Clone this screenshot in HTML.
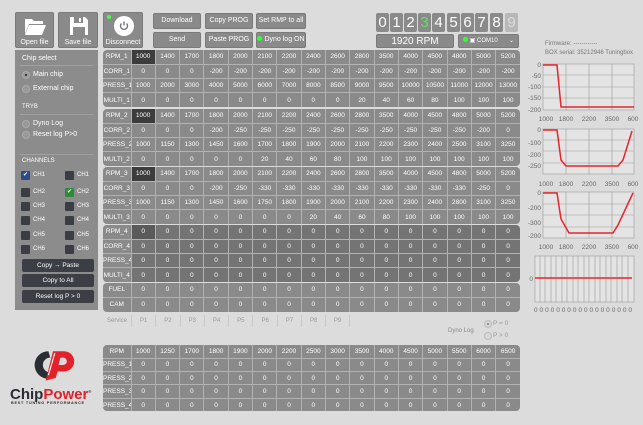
<!DOCTYPE html>
<html><head><meta charset="utf-8"><style>
*{margin:0;padding:0;box-sizing:border-box}
body{width:643px;height:425px;background:#dcdcdc;font-family:"Liberation Sans",sans-serif;position:relative;overflow:hidden;color:#fff}
.a{position:absolute}
.btn{position:absolute;background:#8a8a8a;border:1px solid #7a7a7a;border-radius:2px;color:#fff;font-size:7px;text-align:center}
table{position:absolute;left:103px;width:417px;border-collapse:collapse;table-layout:fixed;font-size:6.5px;color:#fff;text-align:center}
td{border:1px solid #b2b2b2;height:14.3px;padding:0;overflow:hidden;white-space:nowrap}
.bt td{height:13.3px}
td:first-child{width:28px;border-left:none}
td:last-child{border-right:none}
tr:first-child td{border-top:none}tr:last-child td{border-bottom:none}
.t{background:#8a8a8a;border-radius:4px;overflow:hidden}
.d{background:#747474}
.h{background:#3c3c3c}
.lp{position:absolute;left:15px;top:50px;width:83px;height:260px;background:#8c8c8c;font-size:7px}
.cb{position:absolute;width:9px;height:9px;background:#3a3d44;border-radius:1px}
.db{position:absolute;left:22px;width:72px;height:13px;background:#3b3e44;border-radius:2px;font-size:6.5px;text-align:center;line-height:13px}
.dg{position:absolute;top:13px;width:13px;height:19px;background:#8a8a8a;border-radius:2px;font-size:15px;line-height:19px;text-align:center}
.rd{position:absolute;width:8px;height:8px;border-radius:50%;border:1px solid #aaa;background:#999}
</style></head><body>

<div class="btn" style="left:15px;top:12px;width:39px;height:36px">
<svg class="a" style="left:8px;top:3px" width="22" height="20" viewBox="0 0 22 20"><path d="M1 3h7l2 2h9v3H5L1 18z" fill="#fff"/><path d="M5 9h17l-4 10H1z" fill="#fff"/></svg>
<div class="a" style="left:0;top:26px;width:37px">Open file</div></div>
<div class="btn" style="left:58px;top:12px;width:40px;height:36px">
<svg class="a" style="left:10px;top:3px" width="20" height="20" viewBox="0 0 20 20"><path d="M1 1h15l3 3v15H1z" fill="#fff"/><rect x="5" y="1" width="9" height="6" fill="#8a8a8a"/><rect x="10" y="2" width="2" height="4" fill="#fff"/><rect x="4" y="11" width="12" height="8" fill="#8a8a8a"/></svg>
<div class="a" style="left:0;top:26px;width:38px">Save file</div></div>
<div class="btn" style="left:103px;top:12px;width:40px;height:36px">
<div class="a" style="left:3px;top:2px;width:4px;height:4px;border-radius:50%;background:#4f4"></div>
<div class="a" style="left:10px;top:3px;width:20px;height:20px;border-radius:50%;background:#fff"></div>
<svg class="a" style="left:14px;top:7px" width="12" height="12" viewBox="0 0 12 12"><path d="M3.5 3.5A3.5 3.5 0 1 0 8.5 3.5" fill="none" stroke="#777" stroke-width="1.4"/><path d="M6 1.5v4" stroke="#777" stroke-width="1.4"/></svg>
<div class="a" style="left:0;top:26px;width:38px">Disconnect</div></div>

<div class="btn" style="left:153px;top:13px;width:48px;height:16px;line-height:14px">Download</div>
<div class="btn" style="left:153px;top:32px;width:48px;height:16px;line-height:14px">Send</div>
<div class="btn" style="left:205px;top:13px;width:48px;height:16px;line-height:14px">Copy PROG</div>
<div class="btn" style="left:205px;top:32px;width:48px;height:16px;line-height:14px">Paste PROG</div>
<div class="btn" style="left:256px;top:13px;width:50px;height:16px;line-height:14px">Set RMP to all</div>
<div class="btn" style="left:256px;top:32px;width:50px;height:16px;line-height:14px"><span style="display:inline-block;width:5px;height:5px;border-radius:50%;background:#3f3;margin-right:2px"></span>Dyno log ON</div>

<div class="dg" style="left:376px">0</div><div class="dg" style="left:390px">1</div><div class="dg" style="left:404px">2</div><div class="dg" style="left:418px;color:#6d6">3</div><div class="dg" style="left:432px">4</div><div class="dg" style="left:447px">5</div><div class="dg" style="left:461px">6</div><div class="dg" style="left:475px">7</div><div class="dg" style="left:490px">8</div><div class="dg" style="left:505px;background:#b8b8b8;color:#ddd">9</div>
<div class="btn" style="left:376px;top:34px;width:78px;height:14px;font-size:10px;line-height:13px">1920 RPM</div>
<div class="btn" style="left:458px;top:34px;width:61px;height:14px;font-size:6px;line-height:12px;text-align:left;padding-left:4px"><span style="display:inline-block;width:5px;height:5px;border-radius:50%;background:#3f3"></span> ▣ COM10 <span style="float:right;margin-right:4px">⌄</span></div>

<div class="lp">
<div class="a" style="left:7px;top:5px">Chip select</div>
<div class="a" style="left:5px;top:15px;width:73px;height:1px;background:#a0a0a0"></div>
<div class="rd" style="left:7px;top:21px"><div class="a" style="left:2px;top:2px;width:2px;height:2px;background:#222;border-radius:50%"></div></div>
<div class="a" style="left:18px;top:21px">Main chip</div>
<div class="rd" style="left:7px;top:35px"></div><div class="a" style="left:18px;top:35px">External chip</div>
<div class="a" style="left:7px;top:54px;font-size:6px">TRYB</div>
<div class="a" style="left:5px;top:64px;width:73px;height:1px;background:#a0a0a0"></div>
<div class="rd" style="left:7px;top:70px"></div><div class="a" style="left:18px;top:70px">Dyno Log</div>
<div class="rd" style="left:7px;top:81px"></div><div class="a" style="left:18px;top:81px">Reset log P&gt;0</div>
<div class="a" style="left:5px;top:104px;width:73px;height:1px;background:#a0a0a0"></div>
<div class="a" style="left:7px;top:108px;font-size:6px">CHANNELS</div>
<div class="cb" style="left:6px;top:121px;background:#2d4a8a;font-size:6px;line-height:9px;text-align:center">✔</div><div class="a" style="left:18px;top:122px;font-size:6px">CH1</div>
<div class="cb" style="left:50px;top:121px"></div><div class="a" style="left:62px;top:122px;font-size:6px">CH1</div>
<div class="cb" style="left:6px;top:138px"></div><div class="a" style="left:18px;top:139px;font-size:6px">CH2</div>
<div class="cb" style="left:50px;top:138px;background:#2f8a3a;font-size:6px;line-height:9px;text-align:center">✔</div><div class="a" style="left:62px;top:139px;font-size:6px">CH2</div>
<div class="cb" style="left:6px;top:152px"></div><div class="a" style="left:18px;top:153px;font-size:6px">CH3</div>
<div class="cb" style="left:50px;top:152px"></div><div class="a" style="left:62px;top:153px;font-size:6px">CH3</div>
<div class="cb" style="left:6px;top:166px"></div><div class="a" style="left:18px;top:167px;font-size:6px">CH4</div>
<div class="cb" style="left:50px;top:166px"></div><div class="a" style="left:62px;top:167px;font-size:6px">CH4</div>
<div class="cb" style="left:6px;top:181px"></div><div class="a" style="left:18px;top:182px;font-size:6px">CH5</div>
<div class="cb" style="left:50px;top:181px"></div><div class="a" style="left:62px;top:182px;font-size:6px">CH5</div>
<div class="cb" style="left:6px;top:195px"></div><div class="a" style="left:18px;top:196px;font-size:6px">CH6</div>
<div class="cb" style="left:50px;top:195px"></div><div class="a" style="left:62px;top:196px;font-size:6px">CH6</div>
</div>
<div class="db" style="top:259px">Copy → Paste</div>
<div class="db" style="top:274px">Copy to All</div>
<div class="db" style="top:290px">Reset log P &gt; 0</div>

<table class="t" style="top:50px"><tr><td>RPM_1</td><td class="h">1000</td><td>1400</td><td>1700</td><td>1800</td><td>2000</td><td>2100</td><td>2200</td><td>2400</td><td>2600</td><td>2800</td><td>3500</td><td>4000</td><td>4500</td><td>4800</td><td>5000</td><td>5200</td></tr>
<tr><td>CORR_1</td><td>0</td><td>0</td><td>0</td><td>-200</td><td>-200</td><td>-200</td><td>-200</td><td>-200</td><td>-200</td><td>-200</td><td>-200</td><td>-200</td><td>-200</td><td>-200</td><td>-200</td><td>-200</td></tr>
<tr><td>PRESS_1</td><td>1000</td><td>2000</td><td>3000</td><td>4000</td><td>5000</td><td>6000</td><td>7000</td><td>8000</td><td>8500</td><td>9000</td><td>9500</td><td>10000</td><td>10500</td><td>11000</td><td>12000</td><td>13000</td></tr>
<tr><td>MULTI_1</td><td>0</td><td>0</td><td>0</td><td>0</td><td>0</td><td>0</td><td>0</td><td>0</td><td>0</td><td>20</td><td>40</td><td>60</td><td>80</td><td>100</td><td>100</td><td>100</td></tr></table>

<table class="t" style="top:109px"><tr><td>RPM_2</td><td class="h">1000</td><td>1400</td><td>1700</td><td>1800</td><td>2000</td><td>2100</td><td>2200</td><td>2400</td><td>2600</td><td>2800</td><td>3500</td><td>4000</td><td>4500</td><td>4800</td><td>5000</td><td>5200</td></tr>
<tr><td>CORR_2</td><td>0</td><td>0</td><td>0</td><td>-200</td><td>-250</td><td>-250</td><td>-250</td><td>-250</td><td>-250</td><td>-250</td><td>-250</td><td>-250</td><td>-250</td><td>-250</td><td>-200</td><td>0</td></tr>
<tr><td>PRESS_2</td><td>1000</td><td>1150</td><td>1300</td><td>1450</td><td>1600</td><td>1700</td><td>1800</td><td>1900</td><td>2000</td><td>2100</td><td>2200</td><td>2300</td><td>2400</td><td>2500</td><td>3100</td><td>3250</td></tr>
<tr><td>MULTI_2</td><td>0</td><td>0</td><td>0</td><td>0</td><td>0</td><td>20</td><td>40</td><td>60</td><td>80</td><td>100</td><td>100</td><td>100</td><td>100</td><td>100</td><td>100</td><td>100</td></tr></table>

<table class="t" style="top:167px"><tr><td>RPM_3</td><td class="h">1000</td><td>1400</td><td>1700</td><td>1800</td><td>2000</td><td>2100</td><td>2200</td><td>2400</td><td>2600</td><td>2800</td><td>3500</td><td>4000</td><td>4500</td><td>4800</td><td>5000</td><td>5200</td></tr>
<tr><td>CORR_3</td><td>0</td><td>0</td><td>0</td><td>-200</td><td>-250</td><td>-330</td><td>-330</td><td>-330</td><td>-330</td><td>-330</td><td>-330</td><td>-330</td><td>-330</td><td>-330</td><td>-250</td><td>0</td></tr>
<tr><td>PRESS_3</td><td>1000</td><td>1150</td><td>1300</td><td>1450</td><td>1600</td><td>1750</td><td>1800</td><td>1900</td><td>2000</td><td>2100</td><td>2200</td><td>2300</td><td>2400</td><td>2800</td><td>3100</td><td>3250</td></tr>
<tr><td>MULTI_3</td><td>0</td><td>0</td><td>0</td><td>0</td><td>0</td><td>0</td><td>0</td><td>20</td><td>40</td><td>60</td><td>80</td><td>100</td><td>100</td><td>100</td><td>100</td><td>100</td></tr></table>

<table class="t d" style="top:225px"><tr><td style="background:#8a8a8a">RPM_4</td><td class="h" style="background:#5a5a5a">0</td><td>0</td><td>0</td><td>0</td><td>0</td><td>0</td><td>0</td><td>0</td><td>0</td><td>0</td><td>0</td><td>0</td><td>0</td><td>0</td><td>0</td><td>0</td></tr>
<tr><td style="background:#8a8a8a">CORR_4</td><td>0</td><td>0</td><td>0</td><td>0</td><td>0</td><td>0</td><td>0</td><td>0</td><td>0</td><td>0</td><td>0</td><td>0</td><td>0</td><td>0</td><td>0</td><td>0</td></tr>
<tr><td style="background:#8a8a8a">PRESS_4</td><td>0</td><td>0</td><td>0</td><td>0</td><td>0</td><td>0</td><td>0</td><td>0</td><td>0</td><td>0</td><td>0</td><td>0</td><td>0</td><td>0</td><td>0</td><td>0</td></tr>
<tr><td style="background:#8a8a8a">MULTI_4</td><td>0</td><td>0</td><td>0</td><td>0</td><td>0</td><td>0</td><td>0</td><td>0</td><td>0</td><td>0</td><td>0</td><td>0</td><td>0</td><td>0</td><td>0</td><td>0</td></tr></table>

<table class="t" style="top:283px"><tr><td>FUEL</td><td>0</td><td>0</td><td>0</td><td>0</td><td>0</td><td>0</td><td>0</td><td>0</td><td>0</td><td>0</td><td>0</td><td>0</td><td>0</td><td>0</td><td>0</td><td>0</td></tr>
<tr><td>CAM</td><td>0</td><td>0</td><td>0</td><td>0</td><td>0</td><td>0</td><td>0</td><td>0</td><td>0</td><td>0</td><td>0</td><td>0</td><td>0</td><td>0</td><td>0</td><td>0</td></tr></table>

<div class="a" style="left:103px;top:315px;width:270px;font-size:6px;color:#999;display:flex">
<div style="width:28px;text-align:center;line-height:12px">Service</div>
<div style="width:24.3px;text-align:center;border-left:1px solid #c8c8c8;line-height:12px">P1</div><div style="width:24.3px;text-align:center;border-left:1px solid #c8c8c8;line-height:12px">P2</div><div style="width:24.3px;text-align:center;border-left:1px solid #c8c8c8;line-height:12px">P3</div><div style="width:24.3px;text-align:center;border-left:1px solid #c8c8c8;line-height:12px">P4</div><div style="width:24.3px;text-align:center;border-left:1px solid #c8c8c8;line-height:12px">P5</div><div style="width:24.3px;text-align:center;border-left:1px solid #c8c8c8;line-height:12px">P6</div><div style="width:24.3px;text-align:center;border-left:1px solid #c8c8c8;line-height:12px">P7</div><div style="width:24.3px;text-align:center;border-left:1px solid #c8c8c8;line-height:12px">P8</div><div style="width:24.3px;text-align:center;border-left:1px solid #c8c8c8;border-right:1px solid #c8c8c8;line-height:12px">P9</div></div>

<div class="a" style="left:448px;top:328px;font-size:6px;color:#888">Dyno Log</div>
<div class="rd" style="left:484px;top:320px;background:#d8d8d8;border-color:#bbb"><div class="a" style="left:2px;top:2px;width:2px;height:2px;background:#777;border-radius:50%"></div></div><div class="a" style="left:493px;top:320px;font-size:6.5px;color:#999">P = 0</div>
<div class="rd" style="left:484px;top:332px;background:#d8d8d8;border-color:#bbb"></div><div class="a" style="left:493px;top:332px;font-size:6.5px;color:#999">P &gt; 0</div>

<table class="t bt" style="top:345px"><tr><td>RPM</td><td>1000</td><td>1250</td><td>1700</td><td>1800</td><td>1900</td><td>2000</td><td>2200</td><td>2500</td><td>3000</td><td>3500</td><td>4000</td><td>4500</td><td>5000</td><td>5500</td><td>6000</td><td>6500</td></tr>
<tr><td>PRESS_1</td><td>0</td><td>0</td><td>0</td><td>0</td><td>0</td><td>0</td><td>0</td><td>0</td><td>0</td><td>0</td><td>0</td><td>0</td><td>0</td><td>0</td><td>0</td><td>0</td></tr>
<tr><td>PRESS_2</td><td>0</td><td>0</td><td>0</td><td>0</td><td>0</td><td>0</td><td>0</td><td>0</td><td>0</td><td>0</td><td>0</td><td>0</td><td>0</td><td>0</td><td>0</td><td>0</td></tr>
<tr><td>PRESS_3</td><td>0</td><td>0</td><td>0</td><td>0</td><td>0</td><td>0</td><td>0</td><td>0</td><td>0</td><td>0</td><td>0</td><td>0</td><td>0</td><td>0</td><td>0</td><td>0</td></tr>
<tr><td>PRESS_4</td><td>0</td><td>0</td><td>0</td><td>0</td><td>0</td><td>0</td><td>0</td><td>0</td><td>0</td><td>0</td><td>0</td><td>0</td><td>0</td><td>0</td><td>0</td><td>0</td></tr></table>

<svg class="a" style="left:30px;top:346px" width="46" height="38" viewBox="0 0 50 38">
<path d="M20 4A15 15 0 1 0 20 34L22 27A8 8 0 1 1 22 11Z" fill="#2a2d33"/>
<path d="M17 36L25 4H37A11 11 0 0 1 37 26H30L28 33ZM31 19H36A4 4 0 0 0 36 11H33Z" fill="#e2212b"/>
<path d="M20 30L27 6" stroke="#fff" stroke-width="1.2"/>
</svg>
<div class="a" style="left:10px;top:385px;font-size:15px;font-weight:bold;color:#2a2d33;line-height:14px">Chip<span style="color:#e2212b">Power</span><sup style="font-size:4px">®</sup></div>
<div class="a" style="left:11px;top:401px;font-size:3.8px;font-weight:bold;color:#2a2d33;letter-spacing:0.75px">BEST TUNING PERFORMANCE</div>

<div class="a" style="left:545px;top:41px;font-size:6px;color:#777">Firmware: ------------</div>
<div class="a" style="left:545px;top:50px;font-size:6px;color:#777">BOX serial: 35212946 Tuningbox</div>
<svg class="a" style="left:525px;top:55px" width="118" height="260" viewBox="525 55 118 260" font-family="Liberation Sans" font-size="6.5" fill="#666">
<g stroke="#999" stroke-width="0.6" fill="none">
<rect x="543" y="64" width="91" height="46" fill="#e4e4e4"/>
<path d="M566 64v46M589 64v46M612 64v46M543 75h91M543 87h91M543 98h91"/>
<rect x="543" y="129" width="91" height="45" fill="#e4e4e4"/>
<path d="M566 129v45M589 129v45M612 129v45M543 140h91M543 151h91M543 163h91"/>
<rect x="543" y="192" width="91" height="46" fill="#e4e4e4"/>
<path d="M566 192v46M589 192v46M612 192v46M543 204h91M543 215h91M543 227h91"/>
<rect x="535" y="256" width="99" height="46" fill="#e4e4e4"/>
<path d="M540 256v46M545 256v46M551 256v46M556 256v46M562 256v46M567 256v46M573 256v46M578 256v46M584 256v46M589 256v46M595 256v46M600 256v46M606 256v46M611 256v46M617 256v46M622 256v46M628 256v46"/>
</g>
<g stroke="#e8242c" stroke-width="1.5" fill="none">
<path d="M543 65L557 65L561 107L634 107"/>
<path d="M543 130L557 130L561 160L566 166L618 166L623 160L632 131"/>
<path d="M543 193L557 193L561 219L569 233L613 233L618 225L633 193"/>
<path d="M535 278L632 278"/>
</g>
<g text-anchor="end"><text x="541" y="67">0</text><text x="541" y="78">-50</text><text x="541" y="89">-100</text><text x="541" y="100">-150</text><text x="541" y="112">-200</text>
<text x="541" y="132">0</text><text x="541" y="145">-100</text><text x="541" y="157">-200</text><text x="541" y="168">-250</text>
<text x="541" y="195">0</text><text x="541" y="210">-200</text><text x="541" y="225">-300</text><text x="541" y="238">-200</text>
<text x="533" y="281">0</text></g>
<g text-anchor="middle">
<text x="546" y="121">1000</text><text x="566" y="121">1800</text><text x="589" y="121">2200</text><text x="612" y="121">3500</text><text x="633" y="121">600</text>
<text x="546" y="186">1000</text><text x="566" y="186">1800</text><text x="589" y="186">2200</text><text x="612" y="186">3500</text><text x="633" y="186">600</text>
<text x="546" y="249">1000</text><text x="566" y="249">1800</text><text x="589" y="249">2200</text><text x="612" y="249">3500</text><text x="633" y="249">600</text>
</g>
<text x="534" y="312" textLength="98" lengthAdjust="spacing">000000000000000000</text>
<rect x="534" y="322" width="100" height="90" fill="none" stroke="#c8c8c8" stroke-width="1"/>
</svg>
</body></html>
